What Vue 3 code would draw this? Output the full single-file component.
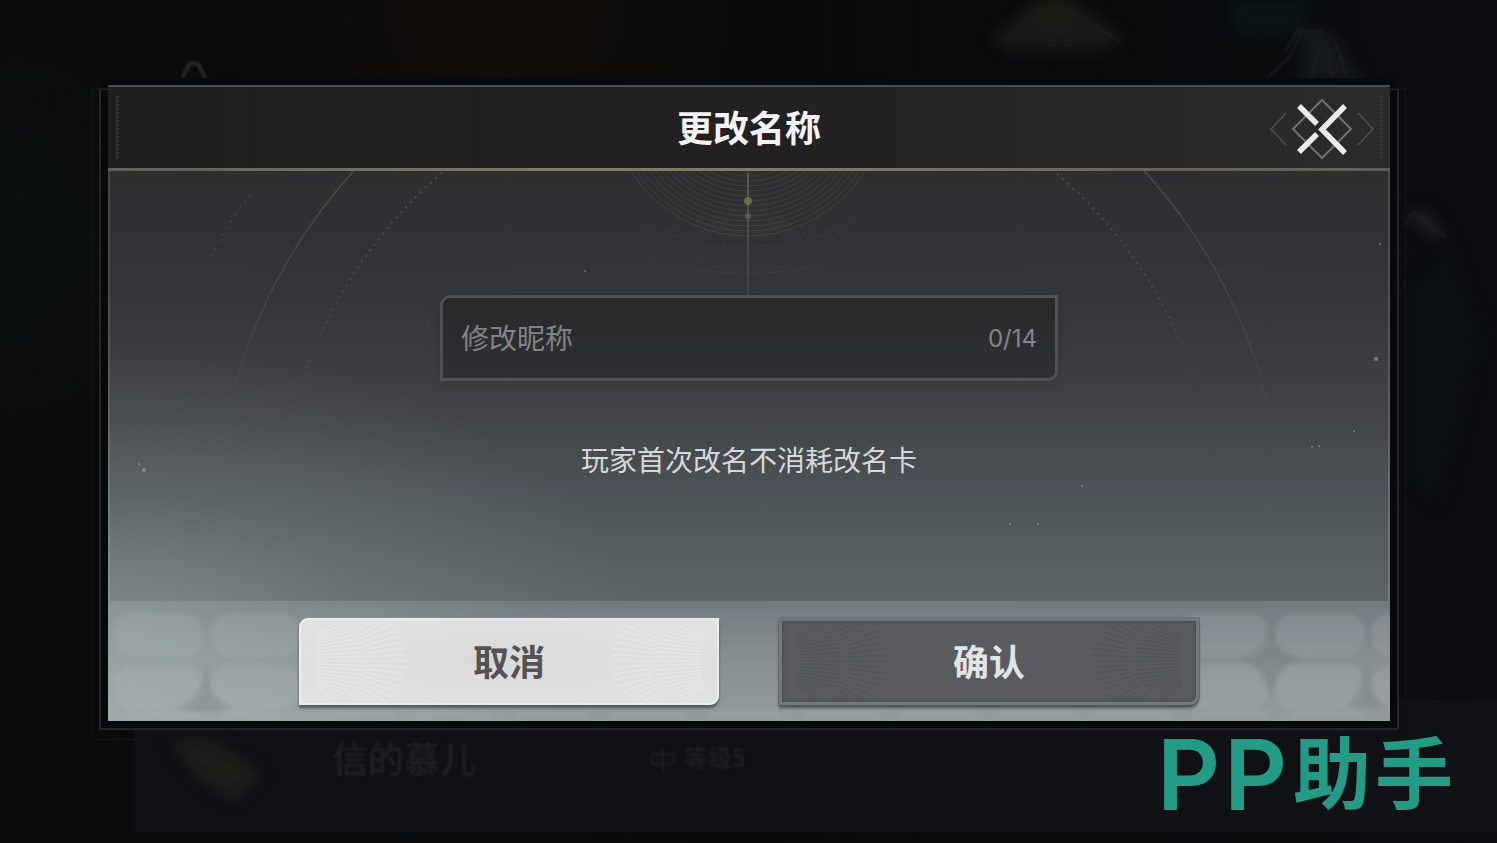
<script setup>
import { ref, computed } from 'vue'

const nickname = ref('')
const limit = 14
const count = computed(() => nickname.value.length)

const arcs = Array.from({ length: 14 }, (_, i) => 73 + i * 5)
const rays = Array.from({ length: 21 }, (_, i) => {
  const a = ((i - 10) * 6 * Math.PI) / 180
  const c = Math.cos(a)
  const s = Math.sin(a)
  return { c, s }
})
const cells = [
  [6, 12], [103, 12], [6, 64], [103, 64],
  [1072, 12], [1168, 12], [1264, 12], [1072, 64], [1168, 64], [1264, 64],
]
const specks = [
  [1272, 73, 1], [1268, 188, 2], [1246, 260, 1], [1204, 276, 1], [1211, 275, 1],
  [974, 315, 1], [902, 353, 1], [930, 353, 1], [36, 299, 2], [31, 293, 1], [477, 100, 1],
]
const ticks = Array.from({ length: 16 }, (_, i) => 6 + i * 4)
</script>

<template>
  <main class="scene">
    <svg class="backdrop" viewBox="0 0 1497 843" preserveAspectRatio="xMidYMid slice" aria-hidden="true">
      <defs>
        <filter id="soft" x="-30%" y="-30%" width="160%" height="160%" color-interpolation-filters="sRGB"><feGaussianBlur stdDeviation="7" /></filter>
        <filter id="haze" color-interpolation-filters="sRGB"><feGaussianBlur stdDeviation="1" /></filter>
      </defs>
      <rect x="135" y="700" width="1362" height="132" fill="#101115" />
      <g filter="url(#soft)">
        <path d="M990 40L1030 5H1080L1125 40L1090 52H1010Z" fill="#171918" />
        <path d="M1034 0H1076L1066 20L1042 22Z" fill="#1b1f12" />
        <path d="M1230 0H1310L1300 34H1235Z" fill="#0a1518" />
        <path d="M1300 30L1330 28L1365 85H1300Z" fill="#15181b" />
        <path d="M1405 215L1425 208L1450 240L1430 236Z" fill="#1f2021" />
        <path d="M1410 290L1450 250L1480 330L1440 500L1410 480Z" fill="#0c1012" />
        <path d="M170 740L215 740L262 775L235 800L200 780Z" fill="#1c1e1a" />
      </g>
      <g filter="url(#haze)" fill="none" stroke="#1c2022" stroke-width="2">
        <path d="M1005 42L1030 14M1050 40Q1062 26 1072 40M1092 24L1120 42" stroke="#191c1b" stroke-width="3" />
        <path d="M1285 52L1298 30L1325 32M1302 32L1290 56L1265 80M1318 50L1310 84M1328 50L1332 84M1335 42L1350 84" />
        <path d="M182 78L190 63L198 64L208 84" stroke="#25282a" stroke-width="4" />
        <path d="M1405 225L1414 212L1445 238" />
        <path d="M190 744L258 776M184 754L246 790M192 768L234 796" stroke="#1a1c19" />
        <path d="M652 754V764H674V754ZM663 748V774" />
      </g>
    </svg>

    <section class="dialog" role="dialog" aria-labelledby="dialog-title">
      <header class="head">
        <svg class="ticks left" width="8" height="74" viewBox="0 0 8 74" aria-hidden="true">
          <path v-for="t in ticks" :key="t" :d="`M2 ${t}l4 1l-3 2`" />
        </svg>
        <h1 id="dialog-title">更改名称</h1>
        <button class="close" type="button" aria-label="关闭">
          <svg width="106" height="64" viewBox="0 0 106 64" aria-hidden="true">
            <g fill="none" stroke="#505050" stroke-width="1.5">
              <path d="M17 16L2 32L17 48M89 16L104 32L89 48" />
              <path d="M53 3L82 32L53 61L24 32Z" stroke="#707070" stroke-width="2" />
            </g>
            <path d="M30 9L48 27M30 55L48 37M76 9L53 32.500L76 56" fill="none" stroke="#ebebeb" stroke-width="5.500" />
          </svg>
        </button>
        <svg class="ticks right" width="8" height="74" viewBox="0 0 8 74" aria-hidden="true">
          <path v-for="t in ticks" :key="t" :d="`M2 ${t}l4 1l-3 2`" />
        </svg>
      </header>

      <div class="body">
        <svg class="art" viewBox="0 0 1282 430" preserveAspectRatio="xMidYMin slice" aria-hidden="true">
          <defs>
            <linearGradient id="fade" x1="0" y1="0" x2="0" y2="1">
              <stop offset="0" stop-color="#8b8d88" stop-opacity="0.5" />
              <stop offset="0.42" stop-color="#8b8d88" stop-opacity="0" />
            </linearGradient>
            <linearGradient id="axis" x1="0" y1="0" x2="0" y2="1">
              <stop offset="0" stop-color="#6f7048" stop-opacity="0.7" />
              <stop offset="0.4" stop-color="#66685a" stop-opacity="0.5" />
              <stop offset="1" stop-color="#55585a" stop-opacity="0.3" />
            </linearGradient>
          </defs>
          <g fill="none" stroke="#70735c" stroke-opacity="0.24">
            <circle v-for="r in arcs" :key="r" cx="640" cy="-73" :r="r" />
          </g>
          <g fill="none" stroke="#85888a" stroke-opacity="0.14" stroke-dasharray="2 4">
            <ellipse cx="640" cy="92" rx="48" ry="6" />
            <ellipse cx="640" cy="88" rx="75" ry="14" />
            <ellipse cx="640" cy="80" rx="100" ry="22" />
            <path d="M540 65Q640 35 740 65M550 75Q640 48 730 75M535 52Q640 100 745 52" />
          </g>
          <rect x="639" y="2" width="2" height="122" fill="url(#axis)" />
          <circle cx="640" cy="30" r="4" fill="#7d7e50" fill-opacity="0.7" />
          <circle cx="640" cy="45" r="3" fill="#76786e" fill-opacity="0.5" />
          <g fill="none" stroke="url(#fade)">
            <circle cx="641" cy="359" r="534" stroke-width="1.500" />
            <circle cx="641" cy="359" r="471" stroke-width="2" stroke-dasharray="2 5" />
          </g>
          <path d="M143 24Q118 53 102 88" fill="none" stroke="#85888a" stroke-opacity="0.18" stroke-width="2" stroke-dasharray="2 6" />
          <circle v-for="(s, i) in specks" :key="i" :cx="s[0]" :cy="s[1]" :r="s[2]" fill="#a5abac" fill-opacity="0.6" />
        </svg>
        <div class="field">
          <input v-model="nickname" type="text" :maxlength="limit" placeholder="修改昵称" aria-label="修改昵称" />
          <span class="counter">{{ count }}/{{ limit }}</span>
        </div>
        <p class="hint">玩家首次改名不消耗改名卡</p>
      </div>

      <footer class="foot">
        <svg class="art" viewBox="0 0 1282 120" preserveAspectRatio="xMidYMid slice" aria-hidden="true">
          <defs>
            <filter id="melt" color-interpolation-filters="sRGB"><feGaussianBlur stdDeviation="2" /></filter>
          </defs>
          <g filter="url(#melt)">
            <g fill="#c4d0d0" fill-opacity="0.14">
              <rect v-for="(c, i) in cells" :key="i" :x="c[0]" :y="c[1]" width="88" height="44" rx="18" />
              <rect v-for="n in 13" :key="'b' + n" :x="n * 97 - 80" y="111" width="76" height="5" rx="2" />
            </g>
            <g fill="#667173" fill-opacity="0.25">
              <path d="M1162 20Q1165 54 1198 57Q1165 62 1162 102Q1158 62 1126 57Q1158 54 1162 20Z" />
              <path d="M99 65Q99 98 125 106Q98 116 68 106Q96 98 96 65Z" />
              <path d="M1259 65Q1259 96 1282 106H1234Q1256 96 1256 65Z" />
            </g>
          </g>
        </svg>
        <button v-for="b in [['cancel', '取消'], ['confirm', '确认']]" :key="b[0]" class="btn" :class="b[0]" type="button">
          <svg v-for="side in ['start', 'end']" :key="side" class="rays" :class="side" width="120" height="83" viewBox="0 0 120 83" aria-hidden="true">
            <path
              v-for="(r, i) in rays"
              :key="i"
              :d="`M${10 + r.c * 6} ${41 + r.s * 30}L${4 + r.c * 60} ${41 + r.s * 44}M${30 + r.c * 36} ${41 + r.s * 38}L${32 + r.c * 74} ${41 + r.s * 62}`"
            />
          </svg>
          <span>{{ b[1] }}</span>
        </button>
      </footer>
    </section>

    <div class="behind" aria-hidden="true">
      <span class="name">信的慕儿</span>
      <span class="level">等级5</span>
    </div>

    <div class="brand"><span class="latin">P</span><span class="latin">P</span><span class="han">助</span><span class="han">手</span></div>
  </main>
</template>

<style>
body {
  margin: 0;
  background: #0a0b0d;
}
</style>

<style scoped>
.scene {
  position: relative;
  box-sizing: border-box;
  min-height: 100vh;
  padding: 85px 107px 0 108px;
  display: flex;
  flex-direction: column;
  overflow: hidden;
  font-family: "Noto Sans CJK SC", "Noto Sans", sans-serif;
  background:
    radial-gradient(circle at 34% 0, #120d09, transparent 18%),
    radial-gradient(circle at 0 28%, #09110e, transparent 12%),
    linear-gradient(90deg, #0c0b0c, #08090a 50%, #0a0c0f);
}
.backdrop,
.art {
  position: absolute;
  inset: 0;
  width: 100%;
  height: 100%;
}
.dialog {
  position: relative;
  z-index: 1;
  display: flex;
  flex-direction: column;
  box-shadow: 0 0 0 7px #08090b;
}
.dialog::before,
.dialog::after {
  content: "";
  position: absolute;
  inset: 3px -9px -9px;
  border: 2px solid #242527;
  pointer-events: none;
  z-index: -1;
}
.dialog::after {
  inset: 3px -16px -19px;
  border: 1px solid #131416;
}
.head {
  position: relative;
  box-sizing: border-box;
  height: 86px;
  padding-bottom: 4px;
  display: flex;
  align-items: center;
  justify-content: center;
  border-top: 2px solid #4c4c4d;
  border-bottom: 3px solid;
  border-image: linear-gradient(90deg, #5e5e5a, #77715f 22%, #857a63 35%, #827764 60%, #6d6255 80%, #5e5d5c) 2 0 3;
  background: linear-gradient(90deg, #1f1f1f, #222222 60%, #2b2b2b);
}
.head::before {
  content: "";
  position: absolute;
  inset: -2px 0 auto;
  height: 2px;
  background: #4c4c4d;
}
h1 {
  margin: 0;
  font-size: 36px;
  line-height: 48px;
  font-weight: 700;
  color: #f3f3f3;
}
.close {
  position: absolute;
  right: 15px;
  top: 10px;
  padding: 0;
  border: 0;
  background: none;
  cursor: pointer;
}
.close svg {
  display: block;
}
.ticks {
  position: absolute;
  top: 3px;
  fill: none;
  stroke: #3c3c3c;
}
.ticks.left {
  left: 5px;
}
.ticks.right {
  right: 5px;
}
.body {
  position: relative;
  box-sizing: border-box;
  min-height: 430px;
  padding: 124px 24px 0;
  display: flex;
  flex-direction: column;
  align-items: center;
  gap: 58px;
  overflow: hidden;
  border-left: 2px solid #ffffff1c;
  border-right: 2px solid #ffffff24;
  background:
    radial-gradient(ellipse 42% 70% at 0 110%, #a2acad8c, #8f999a40 50%, transparent),
    linear-gradient(180deg, #2d2e30, #343538 28%, #414346 56%, #50575a 80%, #5c6568);
  background-origin: border-box;
}
.field {
  position: relative;
  box-sizing: border-box;
  width: min(618px, 100%);
  height: 86px;
  display: flex;
  align-items: center;
  padding: 0 18px;
  border: 3px solid #505154;
  border-radius: 10px 0;
  background: linear-gradient(#29292b, #2f3033);
  box-shadow: 0 4px 12px #0000001f;
}
.field input {
  flex: 1;
  min-width: 0;
  padding: 0 0 2px;
  border: 0;
  outline: 0;
  background: none;
  color: #d4d6d8;
  font: 400 28px/40px "Noto Sans CJK SC", sans-serif;
}
.field input::placeholder {
  color: #828385;
  opacity: 1;
}
.counter {
  padding-top: 2px;
  font: 400 24px/32px Inter, "Noto Sans CJK SC", sans-serif;
  color: #858688;
}
.hint {
  position: relative;
  margin: 0;
  font-size: 28px;
  line-height: 40px;
  color: #d5d8da;
}
.foot {
  position: relative;
  display: flex;
  justify-content: center;
  gap: 60px;
  padding: 17px 24px 16px;
  background:
    linear-gradient(90deg, #b4c4c45c, transparent 35%),
    linear-gradient(180deg, #727b7f, #899193 55%, #949b9d);
}
.btn {
  position: relative;
  box-sizing: border-box;
  width: 420px;
  height: 87px;
  padding: 0 0 4px;
  font: 700 36px/48px "Noto Sans CJK SC", sans-serif;
  cursor: pointer;
}
.btn span {
  position: relative;
}
.cancel {
  color: #535353;
  background: radial-gradient(ellipse at center, #d9dad9, #e2e2e2);
  border: 2px solid #e8eeef;
  border-radius: 9px 0;
  box-shadow: 0 3px 3px #4d595c;
}
.confirm {
  color: #e3e4e6;
  background: #595b5e;
  border: 3px solid #73797b;
  border-radius: 4px 0 9px 0;
  box-shadow: 0 3px 3px #4d5558, 0 0 0 1px #6b7375, inset 0 0 4px #404447;
}
.rays {
  position: absolute;
  top: 0;
  left: 0;
  height: 100%;
  fill: none;
}
.rays.end {
  left: auto;
  right: 0;
  transform: scaleX(-1);
}
.cancel .rays {
  stroke: #efefef;
  stroke-opacity: 0.6;
}
.confirm .rays {
  stroke: #484d51;
  stroke-opacity: 0.45;
}
.behind {
  position: relative;
  display: flex;
  align-items: center;
  gap: 208px;
  padding: 12px 0 0 224px;
  color: #1e2022;
  font-weight: 500;
  filter: blur(1px);
}
.name {
  font-size: 36px;
  line-height: 48px;
}
.level {
  font-size: 24px;
  line-height: 32px;
}
.brand {
  position: absolute;
  right: 42px;
  bottom: 6px;
  z-index: 2;
  display: flex;
  align-items: center;
  color: #219c87;
  line-height: 112px;
}
.latin {
  width: 67px;
  font-family: Inter, sans-serif;
  font-size: 98px;
  font-weight: 600;
}
.han {
  width: 82px;
  padding-bottom: 12px;
  font-size: 78px;
  font-weight: 700;
  text-align: center;
}
</style>
